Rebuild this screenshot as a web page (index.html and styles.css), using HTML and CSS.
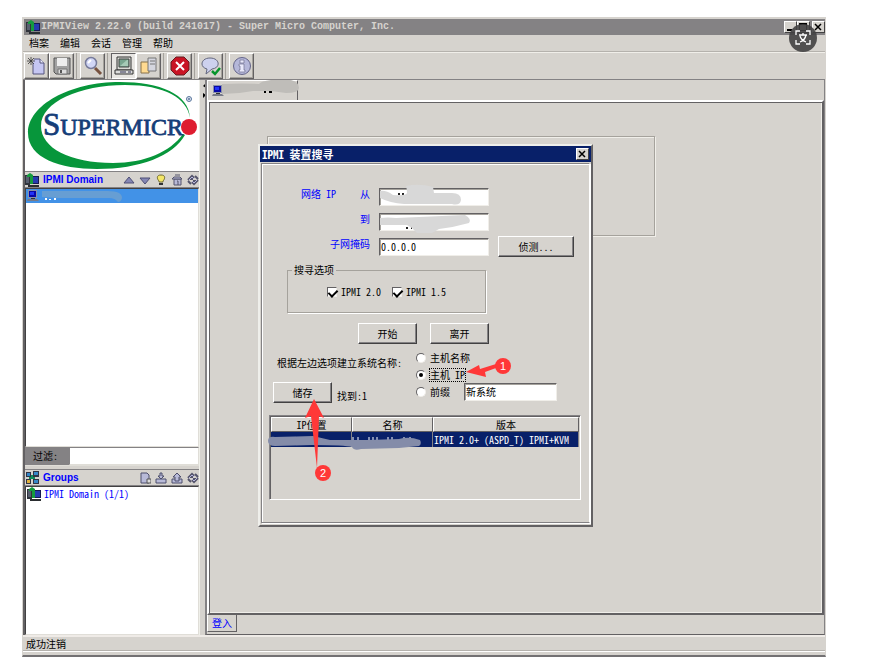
FILE: index.html
```html
<!DOCTYPE html>
<html lang="zh-CN">
<head>
<meta charset="utf-8">
<title>IPMIView</title>
<link rel="stylesheet" href="styles.css">
</head>
<body>
<svg class="defs" aria-hidden="true">
  <defs>
    <symbol id="domain" viewBox="0 0 14 14">
      <path d="M0 2h5v10H0z" fill="#30343c"/><path d="M1 3h3v7H1z" fill="#596070"/>
      <path d="M5 3h9v8H5z" fill="#161a50"/><path d="M6 4h7v6H6z" fill="#263cae"/>
      <path d="M2 2l3-2 3 2v9H5V4H2z" fill="#159b3e"/><path d="M3 12h11v2H3z" fill="#2a2d30"/>
    </symbol>
    <symbol id="pc" viewBox="0 0 12 12">
      <path d="M1 0h9v8H1z" fill="#8990a8"/><path d="M2 1h7v6H2z" fill="#0808a8"/><path d="M3 2h4v3H3z" fill="#2334f8"/>
      <path d="M1 9h9l2 2H0z" fill="#777b88"/><path d="M4 8h4v1H4z" fill="#333"/>
    </symbol>
    <symbol id="refresh" viewBox="0 0 12 12">
      <path d="M1 6l4-4 2 2M5 2v3H2M11 6l-4 4-2-2M7 10V7h3M8 2l3 3M1 7l3 3" fill="none" stroke="#55556c" stroke-width="2"/>
      <path d="M2 6l3-3 2 2M10 6l-3 3-2-2" fill="none" stroke="#b9b9df"/>
    </symbol>
  </defs>
</svg>

<div class="window">
  <header class="titlebar">
    <svg class="i14"><use href="#domain"/></svg>
    <h1>IPMIView 2.22.0 (build 241017) - Super Micro Computer, Inc.</h1>
    <div class="winbtns">
      <button class="winbtn" aria-label="最小化"><svg viewBox="0 0 10 10"><path d="M2 7h5v2H2z"/></svg></button>
      <button class="winbtn" aria-label="最大化"><svg viewBox="0 0 10 10"><path d="M1 1h8v8H1zM2 3v5h6V3z" fill-rule="evenodd"/></svg></button>
      <button class="winbtn close" aria-label="关闭"><svg viewBox="0 0 10 10"><path d="M2 2l6 6M8 2L2 8" stroke="#000" stroke-width="1.5"/></svg></button>
    </div>
  </header>
  <nav class="menubar">
    <button>档案</button><button>编辑</button><button>会话</button><button>管理</button><button>帮助</button>
  </nav>
  <div class="toolbar">
    <div class="group">
      <button class="tool" aria-label="新建"><svg viewBox="0 0 20 20"><path d="M7 3h6l4 4v11H6V7" fill="#c5c6f2" stroke="#55557d"/><path d="M13 3v4h4" fill="#eef" stroke="#55557d"/><path d="M4 1v8M0 5h8M1 2l6 6M7 2L1 8" stroke="#333" stroke-width=".8"/></svg></button>
      <button class="tool" aria-label="保存"><svg viewBox="0 0 20 20"><path d="M2 2h16v16H4l-2-2z" fill="#a2a2a2" stroke="#555"/><path d="M5 2h10v8H5z" fill="#eee"/><path d="M6 13h9v5H6z" fill="#ddd" stroke="#777"/><path d="M8 14h2v3H8z" fill="#555"/></svg></button>
    </div>
    <div class="group">
      <button class="tool" aria-label="搜寻"><svg viewBox="0 0 20 20"><path d="M12 12l6 6" stroke="#77523f" stroke-width="3"/><circle cx="8" cy="7" r="5.5" fill="#d1d6f6" stroke="#777b9a" stroke-width="1.5"/><path d="M5 7l3-3" stroke="#fff" stroke-width="2"/></svg></button>
    </div>
    <div class="group">
      <button class="tool pressed" aria-label="系统"><svg viewBox="0 0 20 20"><path d="M3 1h14v13H3z" fill="#d8dad5" stroke="#333"/><path d="M5 3h10v8H5z" fill="#78a58f" stroke="#444"/><path d="M6 10l7-6h1v6z" fill="#a5cab6"/><path d="M1 14h18v4H1z" fill="#ddd" stroke="#333"/><path d="M6 16h6M14 16h3" stroke="#335"/></svg></button>
      <button class="tool" aria-label="群组"><svg viewBox="0 0 20 20"><path d="M2 6h8v11H2z" fill="#ffda91" stroke="#88724b"/><path d="M9 2h8v13H9z" fill="#d5d6df" stroke="#777"/><path d="M11 5h5M11 8h5" stroke="#777"/></svg></button>
    </div>
    <div class="group">
      <button class="tool" aria-label="停止"><svg viewBox="0 0 20 20"><path d="M6 1h8l5 5v8l-5 5H6l-5-5V6z" fill="#c91424" stroke="#651c20"/><path d="M6 6l8 8M14 6l-8 8" stroke="#fff" stroke-width="2"/></svg></button>
    </div>
    <div class="group">
      <button class="tool" aria-label="消息"><svg viewBox="0 0 20 20"><path d="M9 2c10 0 11 10 2 11l-6 5 1-5C-2 11 0 2 9 2z" fill="#cdd1ee" stroke="#63677e"/><path d="M11 15l3 3 5-6" fill="none" stroke="#07952b" stroke-width="2.5"/></svg></button>
    </div>
    <div class="group">
      <button class="tool" aria-label="关于"><svg viewBox="0 0 20 20"><circle cx="10" cy="10" r="8.5" fill="#b5b7d9" stroke="#65658a"/><path d="M8 4h4v3H8zM7 8h5v6h1v2H7v-2h1v-4H7z" fill="#e9e9fb" stroke="#70708f" stroke-width=".7"/></svg></button>
    </div>
  </div>

  <div class="workspace">
    <aside class="side">
      <svg class="logo" viewBox="0 0 174 91" role="img" aria-label="Supermicro">
        <path d="M165 38C164 14 135 2 95 2C45 2 3 25 3 53C3 78 35 89 72 89C115 89 148 76 160 55L158 54C145 72 120 83 88 83C45 83 16 68 16 46C16 22 55 5 100 5C140 5 162 18 165 38Z" fill="#07963b"/>
        <text class="brand" x="18" y="55"><tspan class="brand-cap">S</tspan>UPERMICR</text>
        <circle cx="164" cy="47" r="8" fill="#de1d30"/>
        <circle cx="164" cy="19" r="2.5" fill="#dce3ef" stroke="#58759c"/><circle cx="164" cy="19" r="1" fill="#58759c"/>
      </svg>
      <div class="panehead">
        <svg class="i14"><use href="#domain"/></svg><h2>IPMI Domain</h2>
        <button class="mini" aria-label="上移"><svg viewBox="0 0 12 12"><path d="M1 9l5-6 5 6z" fill="#8587b5" stroke="#4e4f75"/></svg></button>
        <button class="mini" aria-label="下移"><svg viewBox="0 0 12 12"><path d="M1 4l5 6 5-6z" fill="#8587b5" stroke="#4e4f75"/></svg></button>
        <button class="mini" aria-label="提示"><svg viewBox="0 0 12 12"><path d="M6 1c5 0 4 4 2 6v1H4V7C2 5 1 1 6 1z" fill="#f4e668" stroke="#716b2e"/><path d="M4 9h4v2H4z" fill="#333"/></svg></button>
        <button class="mini" aria-label="主页"><svg viewBox="0 0 12 12"><path d="M3 5h7v6H3z" fill="#b8b9d6" stroke="#54546d"/><path d="M1 5l2-2h6l2 2z" fill="#b8b9d6" stroke="#54546d"/><path d="M4 1h5M6 7h1v4" fill="none" stroke="#54546d"/></svg></button>
        <button class="mini" aria-label="刷新"><svg><use href="#refresh"/></svg></button>
      </div>
      <div class="tree">
        <div class="node selected"><svg class="i12"><use href="#pc"/></svg><svg class="smudge-tree" viewBox="0 0 84 14"><path d="M4 9v2M8 10v1M13 9v2" stroke="#fff" stroke-width="2"/><path d="M0 2h66q14 0 14 7-1 4-4 4-3-4-9-4H17L0 8z" fill="#679ed3"/></svg></div>
      </div>
      <div class="filter"><label for="filter">过滤:</label><input id="filter" type="text"></div>
      <div class="panehead">
        <svg class="i14" viewBox="0 0 14 14"><path d="M1 1h5v5H1zM8 0h6v6H8zM1 8h5v5H1zM8 8h6v5H8z" fill="#303444"/><path d="M2 2h3v3H2zM9 1h4v3H9zM9 9h4v3H9z" fill="#3688c9"/><path d="M2 9h3v3H2z" fill="#e1b23c"/><path d="M6 4h2v2H6zM4 6h6v2H4z" fill="#108d59"/></svg>
        <h2>Groups</h2>
        <button class="mini" aria-label="新增群组"><svg viewBox="0 0 12 12"><path d="M2 1h6l2 2v8H2z" fill="#b8bad8" stroke="#4d4e6c"/><path d="M8 7h4v4H8z" fill="#ddd" stroke="#555"/></svg></button>
        <button class="mini" aria-label="导入"><svg viewBox="0 0 12 12"><path d="M1 7h10v4H1z" fill="#b8bad8" stroke="#4d4e6c"/><path d="M5 1h2v3h2L6 7 3 4h2z" fill="#b8bad8" stroke="#4d4e6c"/></svg></button>
        <button class="mini" aria-label="导出"><svg viewBox="0 0 12 12"><path d="M1 7h10v4H1z" fill="#b8bad8" stroke="#4d4e6c"/><path d="M6 1l4 4H8v4H4V5H2z" fill="#b8bad8" stroke="#4d4e6c"/></svg></button>
        <button class="mini" aria-label="刷新群组"><svg><use href="#refresh"/></svg></button>
      </div>
      <div class="groups"><div class="node"><svg class="i14"><use href="#domain"/></svg><a href="#">IPMI Domain (1/1)</a></div></div>
    </aside>

    <div class="splitter"><svg viewBox="0 0 4 16"><path d="M4 0v5L1 3zM1 10v5l3-3z"/></svg></div>

    <main class="main">
      <div class="tabs">
        <button class="tab" aria-label="系统标签"><svg class="i12"><use href="#pc"/></svg></button>
        <svg class="smudge-tab" viewBox="0 0 82 18"><path d="M43 12h2M48 12h3" stroke="#000" stroke-width="2"/><path d="M1 4q20-1 37 0 2-3 12-4h20q8 2 8 8 0 5-13 5l-15-2q-12 0-18 0-15 3-31 3z" fill="#bfbdb9"/></svg>
      </div>
      <div class="canvas"><div class="box"></div></div>
      <div class="bottomtabs"><button class="bottomtab">登入</button></div>

      <section class="dialog" role="dialog" aria-labelledby="dlg">
        <header class="dlgtitle"><h2 id="dlg">IPMI 装置搜寻</h2>
          <button class="winbtn" aria-label="关闭对话框"><svg viewBox="0 0 10 10"><path d="M2 2l6 6M8 2L2 8" stroke="#000" stroke-width="1.5"/></svg></button></header>
        <form class="dlgbody">
          <div class="net">
            <span class="lbl">网络 IP</span><label class="lbl" for="from">从</label><input id="from" type="text">
            <label class="lbl wide" for="to">到</label><input id="to" type="text">
            <label class="lbl wide" for="mask">子网掩码</label><input id="mask" type="text" value="0.0.0.0"><button type="button" class="btn">侦测...</button>
          </div>
          <fieldset class="options"><legend>搜寻选项</legend>
            <div class="checks">
              <label><input type="checkbox" checked>IPMI 2.0</label>
              <label><input type="checkbox" checked>IPMI 1.5</label>
            </div>
          </fieldset>
          <div class="actions"><button type="button" class="btn">开始</button><button type="button" class="btn">离开</button></div>
          <div class="naming">
            <div>
              <p>根据左边选项建立系统名称:</p>
              <div class="save"><button type="button" class="btn">储存</button><output>找到:1</output></div>
            </div>
            <div class="radios">
              <label><input type="radio" name="n">主机名称</label>
              <label><input type="radio" name="n" checked><span class="focus">主机 IP</span></label>
              <div class="prefix"><label><input type="radio" name="n">前缀</label><input type="text" value="新系统" aria-label="前缀名称"></div>
            </div>
          </div>
          <div class="results">
            <table>
              <colgroup><col class="c1"><col class="c2"><col></colgroup>
              <thead><tr><th>IP位置</th><th>名称</th><th>版本</th></tr></thead>
              <tbody><tr><td></td><td></td><td>IPMI 2.0+ (ASPD_T) IPMI+KVM</td></tr></tbody>
            </table>
          </div>
        </form>
        <svg class="marks" viewBox="0 0 335 384">
          <path d="M140 50h2M144 50h2M149 49h2M153 50h3M160 50h2M148 84h2M153 84h1" stroke="#222" stroke-width="2"/>
          <g fill="#d8d8d8">
            <path d="M122 47q6-1 13 4 13 1 14-2 0-4-1-7 13-3 27 1l1 6h18q9 0 9 7-1 6-9 4h-48q-14-1-24-6z"/>
            <path d="M122 74q8-1 16 0l69-3q7 4 4 8-14 4-30 6l-7 4h-15l-5-5-5-3h-27z"/>
          </g>
          <path d="M95 293v3M100 293v3M111 293v3M115 293v3M119 293v3M130 293v3M134 293v3M146 293v3M152 293v3" stroke="#fff"/>
          <path d="M10 297q0-5 7-4l38-1 17 4h38l31-1q10-3 21 1 2 4-1 6l-20 2-38 1q-7 2-9-2-7-2-40-2l-37 1q-7 0-7-5z" fill="#848ca9"/>
          <g fill="#ff3838"><path d="M208 228l13-7 1 4 16-5v4l-11 4 1 5zM56 255l10 19-5-2-2 52-6-52-6 2z"/><circle cx="245" cy="222" r="8"/><circle cx="65" cy="329" r="8"/></g>
          <text class="num" x="245" y="226">1</text><text class="num" x="65" y="333">2</text>
        </svg>
      </section>
    </main>
  </div>
  <footer class="status">成功注销</footer>
  <button class="translate" aria-label="翻译"><svg viewBox="0 0 28 28"><path d="M11 7H7v4M17 7h4v4M11 20H7v-4M17 20h4v-4M10 11h8M14 9v2M11 18q5-2 6-7M11 12q1 4 6 6" fill="none" stroke="#fff" stroke-width="1.3"/></svg></button>
</div>
</body>
</html>
```

FILE: styles.css
```css
* { box-sizing: border-box; }
body {
  margin: 0;
  padding: 17px 46px 12px 22px;
  min-height: 100vh;
  display: flex;
  background: #fff;
  color: #000;
  font: 10px/14px "Noto Sans CJK SC", sans-serif;
  font-feature-settings: "hwid";
}
button, input { font: inherit; font-feature-settings: inherit; color: inherit; border-radius: 0; margin: 0; padding: 0; }
button { background: none; border: 0; }
h1, h2, p { margin: 0; font-size: 10px; }
svg { display: block; flex: none; }
.defs { position: absolute; width: 0; height: 0; }
.i14 { width: 14px; height: 14px; }
.i12 { width: 12px; height: 12px; }

.window {
  position: relative;
  flex: 1;
  min-width: 0;
  display: flex;
  flex-direction: column;
  background: #d6d3ce;
  border: 1px solid #d6d3ce;
  border-bottom: 2px solid #737173;
}
.titlebar {
  display: flex;
  align-items: center;
  height: 16px;
  margin: 1px 0 0 1px;
  padding-left: 2px;
  gap: 1px;
  background: #848284;
  color: #d6d3ce;
}
.titlebar h1 { flex: 1; font: bold 10px/14px "Liberation Mono", monospace; white-space: nowrap; }
.winbtns { display: flex; }
.winbtn {
  width: 13px;
  height: 12px;
  background: #d6d3ce;
  border: 1px solid;
  border-color: #fff #424142 #424142 #fff;
}
.winbtn.close { margin-left: 2px; }
.winbtn svg { width: 10px; height: 10px; }
.menubar {
  display: flex;
  gap: 11px;
  height: 17px;
  padding-left: 6px;
  border-bottom: 1px solid #b5b2ad;
}
.toolbar {
  display: flex;
  gap: 6px;
  height: 28px;
  padding-left: 1px;
  border-top: 1px solid #f0eee9;
  border-bottom: 1px solid #848284;
}
.group { display: flex; position: relative; }
.group + .group { box-shadow: -3px 0 #d6d3ce, -4px 0 #a5a29c; }
.tool {
  width: 25px;
  height: 26px;
  padding: 2px;
  background: #d6d3ce;
  border: 1px solid;
  border-color: #fff #636163 #636163 #fff;
  box-shadow: inset -1px -1px #a5a29c;
}
.tool.pressed { background: #e8e6e3; border-color: #636163 #fff #fff #636163; box-shadow: none; }
.tool svg { width: 20px; height: 20px; }

.workspace { flex: 1; display: flex; min-height: 0; }
.side {
  width: 176px;
  display: flex;
  flex-direction: column;
  border-left: 2px solid #636163;
}
.logo { width: 174px; height: 91px; background: #fff; }
.brand { font: 24px "Liberation Serif", serif; fill: #153e78; stroke: #153e78; stroke-width: .8px; }
.brand-cap { font-size: 31px; }
.panehead {
  display: flex;
  align-items: center;
  gap: 4px;
  height: 17px;
  border-top: 1px solid #848284;
  border-bottom: 1px solid #848284;
}
.panehead h2 { flex: 1; font: bold 10px/14px "Liberation Sans", sans-serif; color: #0000ff; }
.mini, .mini svg { width: 12px; height: 12px; }
.tree, .groups { background: #fff; border: 1px solid #424142; border-color: #424142 #e0ded8 #e0ded8 #424142; }
.tree { flex: 260; }
.groups { flex: 148; }
.node { display: flex; align-items: center; gap: 3px; height: 14px; padding-left: 1px; }
.node a { color: #0000ff; text-decoration: none; }
.selected { background: #4292e7; }
.smudge-tree { width: 84px; height: 14px; }
.filter { display: flex; height: 19px; margin-bottom: 3px; background: #fff; border-bottom: 1px solid #e0ded8; }
.filter label { width: 44px; padding: 2px 0 0 8px; background: #848284; }
.filter input { flex: 1; min-width: 0; border: 1px solid; border-color: #848284 #e0ded8 #e0ded8 #848284; }
.splitter { width: 6px; padding: 3px 0 0 2px; border-left: 1px solid #efefe9; }
.splitter svg { width: 4px; height: 16px; }

.main {
  position: relative;
  flex: 1;
  min-width: 0;
  display: flex;
  flex-direction: column;
  border-left: 2px solid #848284;
  border-right: 1px solid #848284;
  border-bottom: 1px solid #636163;
}
.tabs { display: flex; height: 20px; }
.tab { width: 91px; padding: 0 4px; border: 1px solid #fff; border-right: 1px solid #636163; border-bottom: 0; }
.smudge-tab { width: 82px; height: 18px; margin-left: -77px; }
.canvas {
  flex: 1;
  min-height: 400px;
  padding: 34px 58px;
  border: 2px solid #fff;
  border-right-color: #636163;
  border-bottom-color: #636163;
  box-shadow: inset 1px 1px #636163, inset -1px -1px #f0eee9;
}
.box { max-width: 388px; height: 100px; border: 1px solid #a5a29c; box-shadow: inset 1px 1px #f0eee9, 1px 1px #f0eee9; }
.bottomtabs { height: 19px; }
.bottomtab { width: 30px; height: 17px; color: #0000ff; border: 1px solid #636163; border-top: 0; border-left-color: #fff; }
.status {
  height: 20px;
  padding-left: 3px;
  border-top: 2px solid #efebe7;
  box-shadow: inset 0 -3px #d6d3ce, inset 0 -4px #fff, inset 0 -5px #b5b2ad;
}
.translate {
  position: absolute;
  right: 8px;
  top: 6px;
  width: 28px;
  height: 28px;
  border-radius: 50%;
  background: #424142e6;
}

.dialog {
  position: absolute;
  left: 51px;
  top: 64px;
  width: 335px;
  background: #d6d3ce;
  border: 2px solid;
  border-color: #efefeb #636163 #636163 #efefeb;
}
.dlgtitle {
  display: flex;
  align-items: center;
  justify-content: space-between;
  height: 16px;
  padding: 0 2px;
  background: #082069;
  color: #fff;
}
.dlgtitle h2 { font-size: 11px; }
.dlgbody {
  margin: 1px 1px 2px;
  padding: 20px 0 22px;
  border: 1px solid;
  border-color: #848284 #fff #848284 #848284;
  box-shadow: inset 1px 1px #fff, 1px 1px #fff;
}
.net {
  display: grid;
  grid-template-columns: 74px 25px 110px 76px;
  grid-auto-rows: 25px;
  column-gap: 9px;
  align-items: center;
}
.lbl { color: #0000ff; text-align: right; padding-bottom: 6px; }
.lbl.wide { grid-column: 1 / 3; }
input[type="text"] { outline: 0; background: #fff; }
.net input, .prefix input[type="text"] {
  width: 100%;
  height: 18px;
  border: 1px solid;
  border-color: #636163 #f0eee9 #f0eee9 #636163;
  box-shadow: inset 1px 1px #a5a29c;
  padding: 0 1px;
}
.net input { grid-column: 3; }
.btn {
  height: 21px;
  min-width: 59px;
  border: 1px solid;
  border-color: #fff #424142 #424142 #fff;
  box-shadow: inset -1px -1px #848284;
}
.options {
  width: 199px;
  height: 49px;
  margin: 5px 0 0 25px;
  padding: 0;
  border: 1px solid #a5a29c;
  box-shadow: 1px 1px #fff;
}
.options legend { margin-left: 4px; padding: 0 2px; line-height: 12px; }
.checks { display: flex; justify-content: center; gap: 11px; padding-top: 9px; }
.checks label, .radios label { display: flex; align-items: center; gap: 4px; }
input[type="checkbox"], input[type="radio"] {
  appearance: none;
  width: 10px;
  height: 10px;
  background: #fff;
  border: 1px solid;
  border-color: #636163 #f0eee9 #f0eee9 #636163;
}
input[type="checkbox"]:checked::after {
  content: "";
  display: block;
  width: 4px;
  height: 7px;
  margin-left: 2px;
  border: solid #000;
  border-width: 0 2px 2px 0;
  transform: rotate(45deg);
}
input[type="radio"] { border-radius: 50%; }
input[type="radio"]:checked::after {
  content: "";
  display: block;
  width: 4px;
  height: 4px;
  margin: 2px;
  border-radius: 50%;
  background: #000;
}
.actions { display: flex; gap: 13px; margin: 10px 0 5px 96px; }
.naming { display: grid; grid-template-columns: 143px 141px; padding-left: 11px; }
.naming p { height: 33px; padding: 7px 0 0 4px; font-size: 10px; white-space: nowrap; }
.save { display: flex; align-items: flex-end; gap: 5px; }
.radios { display: grid; grid-auto-rows: 17px; align-content: start; align-items: center; }
.focus { outline: 1px dotted #000; line-height: 12px; }
.prefix { display: grid; grid-template-columns: 48px 1fr; align-items: center; }
.results {
  height: 85px;
  margin: 12px 8px 0 7px;
  border: 1px solid;
  border-color: #848284 #fff #fff #848284;
  box-shadow: inset 1px 1px #636163;
  padding: 1px;
}
table { width: 100%; table-layout: fixed; border-collapse: separate; border-spacing: 0; }
.c1, .c2 { width: 81px; }
th, td { height: 15px; padding: 0; line-height: 13px; font-weight: normal; white-space: nowrap; }
th { border: 1px solid; border-color: #fff #636163 #636163 #fff; }
td { background: #082069; color: #fff; padding-left: 1px; border-right: 1px solid #848284; }
.marks { position: absolute; left: -2px; top: -2px; width: 335px; height: 384px; pointer-events: none; }
.num { font: 11px "Liberation Sans", sans-serif; fill: #fff; text-anchor: middle; }
```
